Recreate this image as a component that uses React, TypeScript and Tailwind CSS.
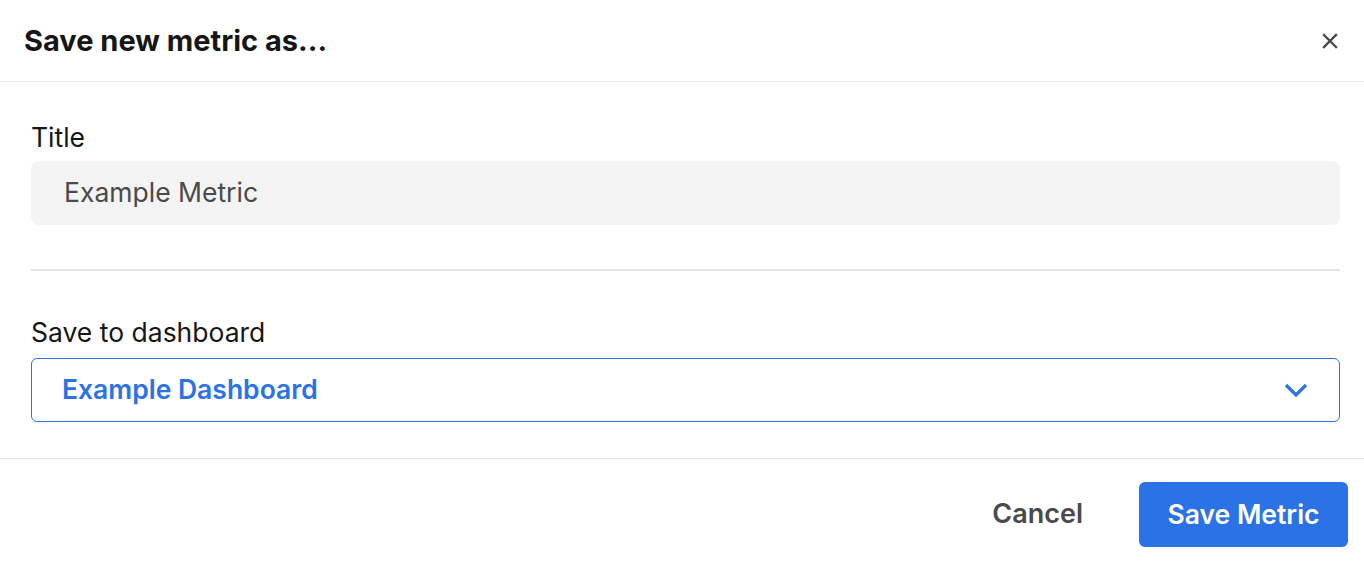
import React from "react";

export default function App() {
  return (
    <div className="w-[1364px] h-[562px] bg-white text-[#161616] font-['Inter',sans-serif] flex flex-col">
      <div className="h-[82px] flex items-center justify-between pl-[24px] pr-[26px] border-b border-[#e5e5e5]">
        <h1 className="text-[29px] font-bold">Save new metric as...</h1>
        <svg width="16" height="16" viewBox="0 0 16 16" className="text-[#4a4a4a]">
          <path d="M2 2L14 14M14 2L2 14" stroke="currentColor" strokeWidth="2.4" strokeLinecap="square" />
        </svg>
      </div>
      <div className="pl-[31px] pr-[24px] pt-[38px] flex flex-col h-[377px] border-b border-[#e5e5e5]">
        <label className="text-[26.5px] leading-[34px]">Title</label>
        <div className="mt-[7px] h-[64px] rounded-[8px] bg-[#f4f4f4] flex items-center pl-[33px] text-[26.5px] text-[#4a4a4a]">
          Example Metric
        </div>
        <div className="mt-[44px] h-[2px] bg-[#e5e5e5]" />
        <label className="mt-[44px] text-[26.5px] leading-[34px]">Save to dashboard</label>
        <div className="mt-[9px] h-[64px] rounded-[6px] border border-[#2a72e5] flex items-center justify-between pl-[30px] pr-[31px]">
          <span className="text-[26.5px] font-semibold text-[#2a72e5]">Example Dashboard</span>
          <svg width="24" height="16" viewBox="0 0 24 16" className="text-[#2a72e5]">
            <path d="M2 3L12 13L22 3" fill="none" stroke="currentColor" strokeWidth="3.2" />
          </svg>
        </div>
      </div>
      <div className="flex-1 flex items-start justify-end pt-[23px] pr-[16px] gap-[26px]">
        <button className="h-[65px] px-[30px] text-[27px] font-semibold text-[#4a4a4a]">Cancel</button>
        <button className="h-[65px] w-[209px] rounded-[6px] bg-[#2a72e5] text-white text-[26.5px] font-semibold">Save Metric</button>
      </div>
    </div>
  );
}
